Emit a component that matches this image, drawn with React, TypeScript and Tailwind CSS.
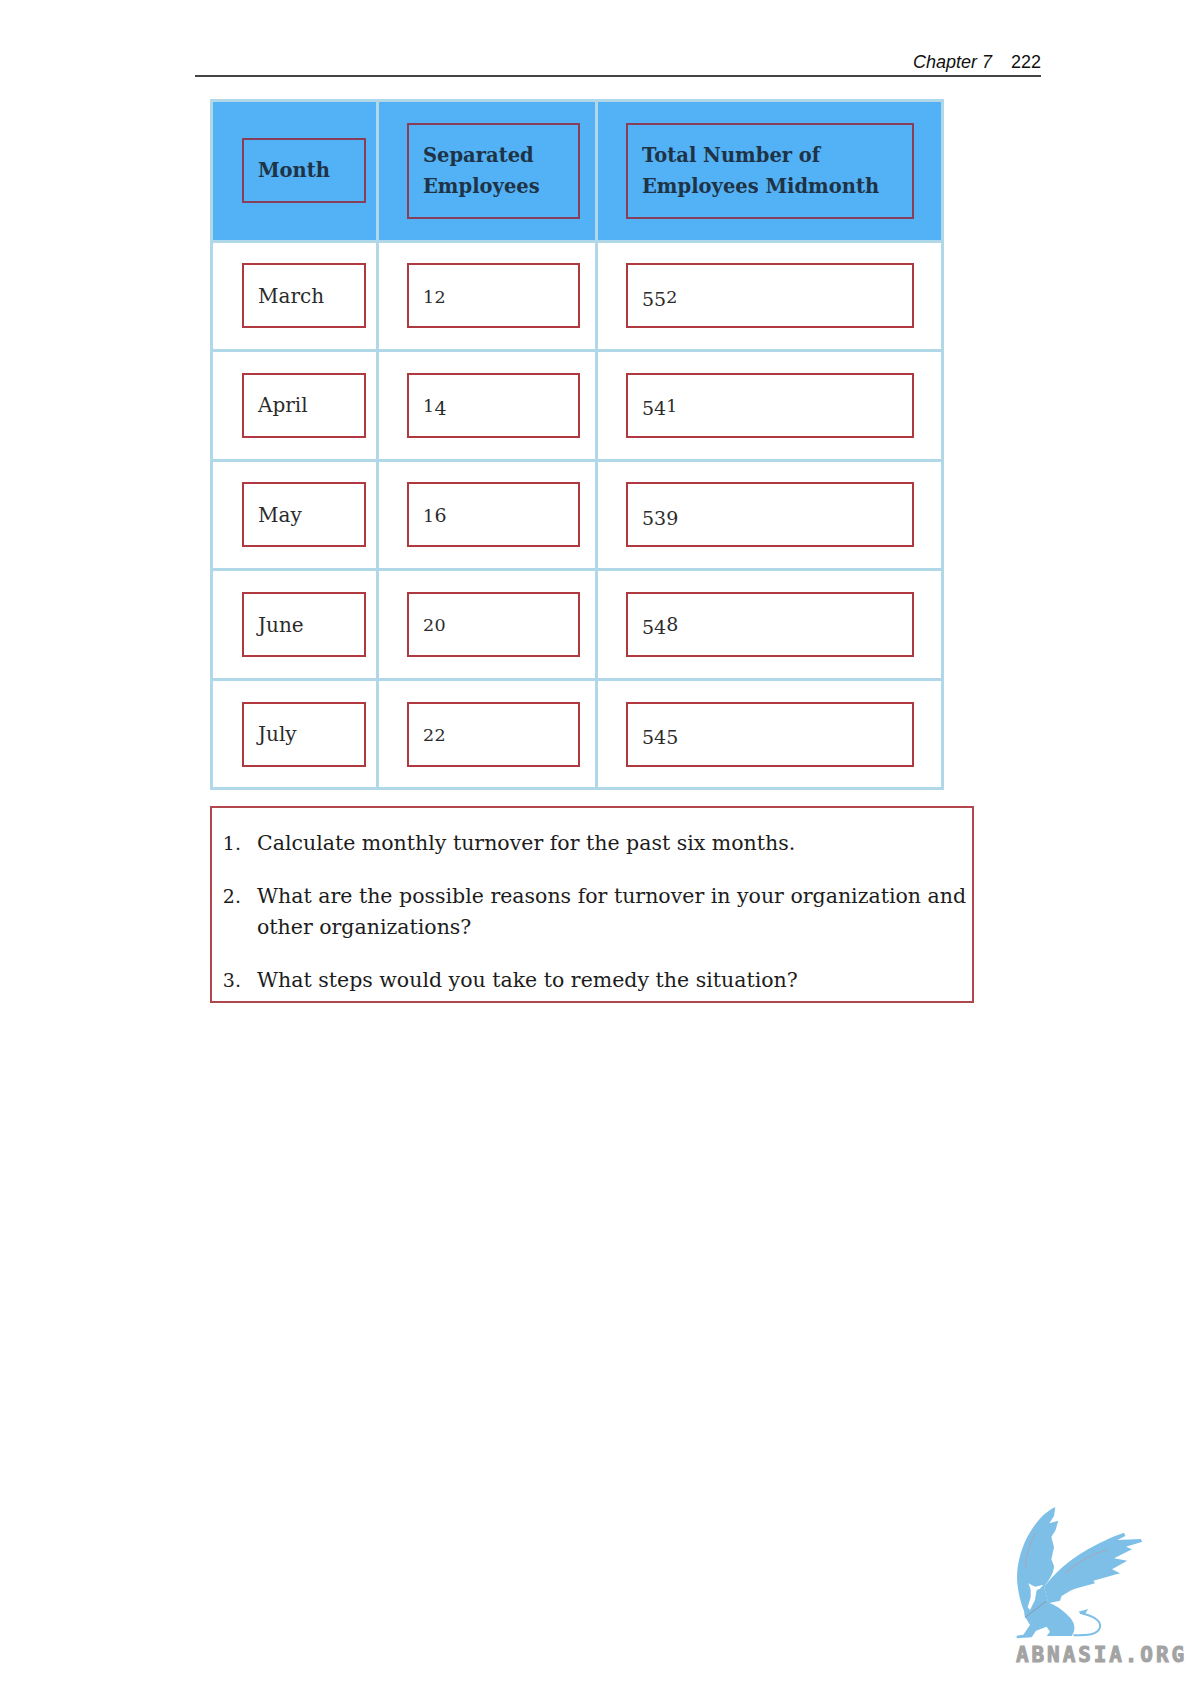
const rows = [
  ['March', '12', '552'],
  ['April', '14', '541'],
  ['May', '16', '539'],
  ['June', '20', '548'],
  ['July', '22', '545'],
];

const questions = [
  'Calculate monthly turnover for the past six months.',
  'What are the possible reasons for turnover in your organization and other organizations?',
  'What steps would you take to remedy the situation?',
];

const serif = "font-['DejaVu_Serif','Liberation_Serif',serif]";

const digitClass = (d: string) => {
  if ('012'.includes(d)) return 'text-[17.5px] tracking-[0.4px]';
  if ('68'.includes(d)) return 'text-[19px]';
  return 'text-[19px] relative top-[3px]';
};

// the book sets old-style figures: low digits sit on the baseline, the rest hang below it
const OldNum = ({ value }: { value: string }) => (
  <span className="text-[19px]">
    {value.split('').map((d, i) => (
      <span key={i} className={digitClass(d)}>
        {d}
      </span>
    ))}
  </span>
);

const Griffin = () => (
  <svg viewBox="0 0 630 582" className="w-[210px] h-[194px] block">
    <path
      fill="#7dbfe6"
      d="M226 52C200 62 165 95 140 145C118 190 108 240 112 280C116 315 124 345 132 362L135 385L205 338L192 290L205 272C212 262 222 245 222 228L214 208L222 172L214 140L226 122L235 92L208 100L222 78Z"
    />
    <path
      fill="#7dbfe6"
      d="M192 290C225 250 265 212 310 186C350 162 395 140 432 128L436 138L412 150L482 147L487 155L438 170L456 178L402 205L442 212L396 238L420 250L340 272L345 280L290 295L275 300L245 318L240 332L205 340Z"
    />
    <path
      fill="#7dbfe6"
      d="M135 380L198 335L205 338C230 345 255 365 272 385C285 402 288 420 275 438L200 438L210 425L200 410L168 422L155 442L110 445L110 437L130 434L150 405Z"
    />
    <path
      fill="none"
      stroke="#7dbfe6"
      strokeWidth="6"
      d="M300 368C325 375 365 385 360 412C355 435 320 436 280 436"
    />
    <path fill="#7dbfe6" d="M295 365L325 357L312 376Z" />
    <path
      fill="#fff"
      d="M145 280L165 290L190 284L180 296L170 300L165 330L150 360L143 352L152 322L152 298Z"
    />
    <path fill="none" stroke="#a9a6b8" strokeWidth="3" d="M166 130C150 160 138 195 136 232" />
    <path fill="none" stroke="#a9a6b8" strokeWidth="3" d="M382 180C340 190 295 215 255 250" />
    <path fill="none" stroke="#8d97ac" strokeWidth="3" d="M198 334L136 382" />
  </svg>
);

export default function App() {
  return (
    <div className={`h-[1684px] w-[1190px] bg-white flex flex-col text-[#2b2b2b] ${serif}`}>
      <div className="ml-[195px] w-[846px] mt-[51px] h-[26px] border-b-2 border-[#444] flex justify-end gap-[19px] font-['Liberation_Sans',sans-serif] text-[18px] leading-[22px] text-[#111]">
        <span className="italic">Chapter 7</span>
        <span>222</span>
      </div>

      <div className="ml-[210px] mt-[22px] w-[734px] border-[3px] border-[#b0d8e8] grid grid-cols-[166px_219px_1fr]">
        <div className="bg-[#52b2f5] border-b-[3px] border-r-[3px] border-[#b0d8e8] h-[140.5px] flex items-center pl-[29px] pr-[10px] font-bold text-[#1f3347] text-[19.5px] leading-[31px]">
          <div className="w-full h-[65px] border-2 border-[#8a3d57] flex items-center pl-[14px]">Month</div>
        </div>
        <div className="bg-[#52b2f5] border-b-[3px] border-r-[3px] border-[#b0d8e8] h-[140.5px] flex items-center pl-[28px] pr-[15px] font-bold text-[#1f3347] text-[19.5px] leading-[31px]">
          <div className="w-full h-[96px] border-2 border-[#8a3d57] flex items-center pl-[14px]">
            Separated<br />Employees
          </div>
        </div>
        <div className="bg-[#52b2f5] border-b-[3px] border-[#b0d8e8] h-[140.5px] flex items-center pl-[28px] pr-[27px] font-bold text-[#1f3347] text-[19.5px] leading-[31px]">
          <div className="w-full h-[96px] border-2 border-[#8a3d57] flex items-center pl-[14px]">
            Total Number of<br />Employees Midmonth
          </div>
        </div>

        {rows.map((r, i) => (
          <div key={r[0]} className="contents">
            <div className={`border-r-[3px] border-[#b0d8e8] flex items-center pl-[29px] pr-[10px] text-[20px] ${i < 4 ? 'h-[109.6px] border-b-[3px]' : 'h-[106.6px]'}`}>
              <div className="w-full h-[65px] border-2 border-[#b0383f] flex items-center pl-[14px]">{r[0]}</div>
            </div>
            <div className={`border-r-[3px] border-[#b0d8e8] flex items-center pl-[28px] pr-[15px] ${i < 4 ? 'h-[109.6px] border-b-[3px]' : 'h-[106.6px]'}`}>
              <div className="w-full h-[65px] border-2 border-[#b0383f] flex items-center pl-[14px]">
                <OldNum value={r[1]} />
              </div>
            </div>
            <div className={`border-[#b0d8e8] flex items-center pl-[28px] pr-[27px] ${i < 4 ? 'h-[109.6px] border-b-[3px]' : 'h-[106.6px]'}`}>
              <div className="w-full h-[65px] border-2 border-[#b0383f] flex items-center pl-[14px]">
                <OldNum value={r[2]} />
              </div>
            </div>
          </div>
        ))}
      </div>

      <div className="ml-[210px] mt-[16px] w-[764px] h-[197px] border-2 border-[#b0474c] pt-[20px] pr-[4px] text-[#1c1c1c] text-[20.5px] leading-[31px] flex flex-col gap-[22px]">
        {questions.map((q, i) => (
          <div key={i} className="flex">
            <span className="w-[29px] text-right shrink-0 text-[19px]">{i + 1}.</span>
            <span className="ml-[16px]">{q}</span>
          </div>
        ))}
      </div>

      <div className="mt-auto flex justify-end relative">
        <Griffin />
        <span className="absolute left-[1016px] bottom-[18px] font-['DejaVu_Sans_Mono',monospace] font-bold text-[21px] tracking-[2.9px] leading-none text-[#a3a3a3] [-webkit-text-stroke:1px_#a3a3a3]">
          ABNASIA.ORG
        </span>
      </div>
    </div>
  );
}
